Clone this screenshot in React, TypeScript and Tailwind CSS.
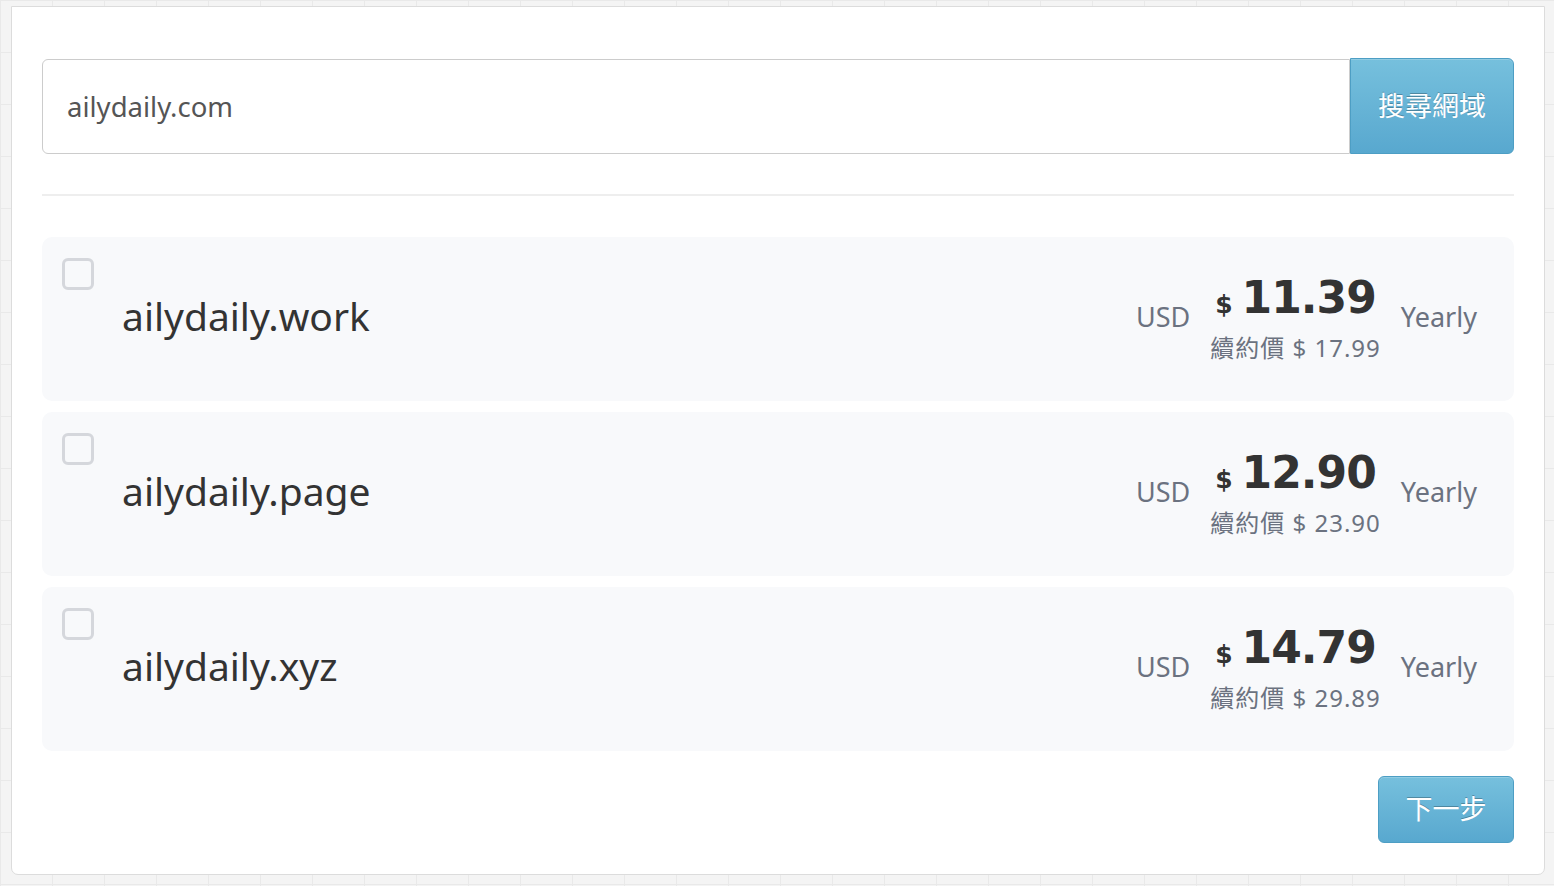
import React from "react";

interface DomainOffer {
  name: string;
  price: string;
  renew: string;
}

const offers: DomainOffer[] = [
  { name: "ailydaily.work", price: "11.39", renew: "17.99" },
  { name: "ailydaily.page", price: "12.90", renew: "23.90" },
  { name: "ailydaily.xyz", price: "14.79", renew: "29.89" },
];

const sans = "font-['Noto_Sans','Noto_Sans_CJK_TC',sans-serif]";

const DomainRow: React.FC<{ offer: DomainOffer }> = ({ offer }) => {
  return (
    <div className="flex h-[164px] items-center rounded-[10px] bg-[#f8f9fb] pl-5 pr-[37px]">
      <div className="mt-[21px] h-8 w-8 shrink-0 self-start rounded-[6px] border-[3px] border-[#d5d7dc] bg-[#f8f9fb]" />
      <div className="ml-7 flex-1 pb-2 text-[39px] leading-none text-[#333]">{offer.name}</div>
      <div className="flex items-center gap-5">
        <span className="pb-[4px] text-[27px] text-[#6b7280]">USD</span>
        <div className="flex flex-col items-center gap-[9px]">
          <div className="flex items-baseline gap-[9px] text-[#333]">
            <span className="font-['DejaVu_Sans',sans-serif] text-[25px] font-bold">$</span>
            <span className="font-['DejaVu_Sans',sans-serif] text-[44px] leading-[46px] font-bold tracking-[-1px]">
              {offer.price}
            </span>
          </div>
          <div className="text-[24px] leading-[30px] tracking-[1px] text-[#6b7280]">
            續約價 $ {offer.renew}
          </div>
        </div>
        <span className="pb-[4px] text-[27px] text-[#6b7280]">Yearly</span>
      </div>
    </div>
  );
};

export default function App() {
  return (
    <div
      className={`min-h-[886px] bg-[#f4f4f4] bg-[linear-gradient(to_right,#e9e9e9_1px,transparent_1px),linear-gradient(to_bottom,#e9e9e9_1px,transparent_1px)] bg-[size:52px_52px] pt-[6px] pb-[10px] pl-[11px] pr-[9px] ${sans}`}
    >
      <div className="rounded-b-[7px] border border-[#dcdcdc] bg-white px-[30px] pt-[52px] pb-[31px]">
        <div className="flex h-[95px]">
          <div className="flex flex-1 items-center rounded-l-[6px] border border-[#cccccc] bg-white px-6 text-[27.5px] text-[#555]">
            ailydaily.com
          </div>
          <button className="-mt-px h-[96px] w-[164px] rounded-r-[6px] border border-[#4d9ec4] bg-linear-to-b from-[#76c0dd] to-[#58a8cf] text-[27px] text-white shadow-[inset_0_1px_0_rgba(255,255,255,0.2)] [text-shadow:0_-1px_0_rgba(0,0,0,0.25)]">
            搜尋網域
          </button>
        </div>

        <div className="mt-[40px] mb-[41px] h-[2px] bg-[#eeeeee]" />

        <div className="flex flex-col gap-[11px]">
          {offers.map((o) => (
            <DomainRow key={o.name} offer={o} />
          ))}
        </div>

        <div className="mt-[25px] flex justify-end">
          <button className="h-[67px] w-[136px] rounded-[6px] border border-[#4d9ec4] bg-linear-to-b from-[#76c0dd] to-[#58a8cf] text-[27px] text-white shadow-[inset_0_1px_0_rgba(255,255,255,0.2)] [text-shadow:0_-1px_0_rgba(0,0,0,0.25)]">
            下一步
          </button>
        </div>
      </div>
    </div>
  );
}
